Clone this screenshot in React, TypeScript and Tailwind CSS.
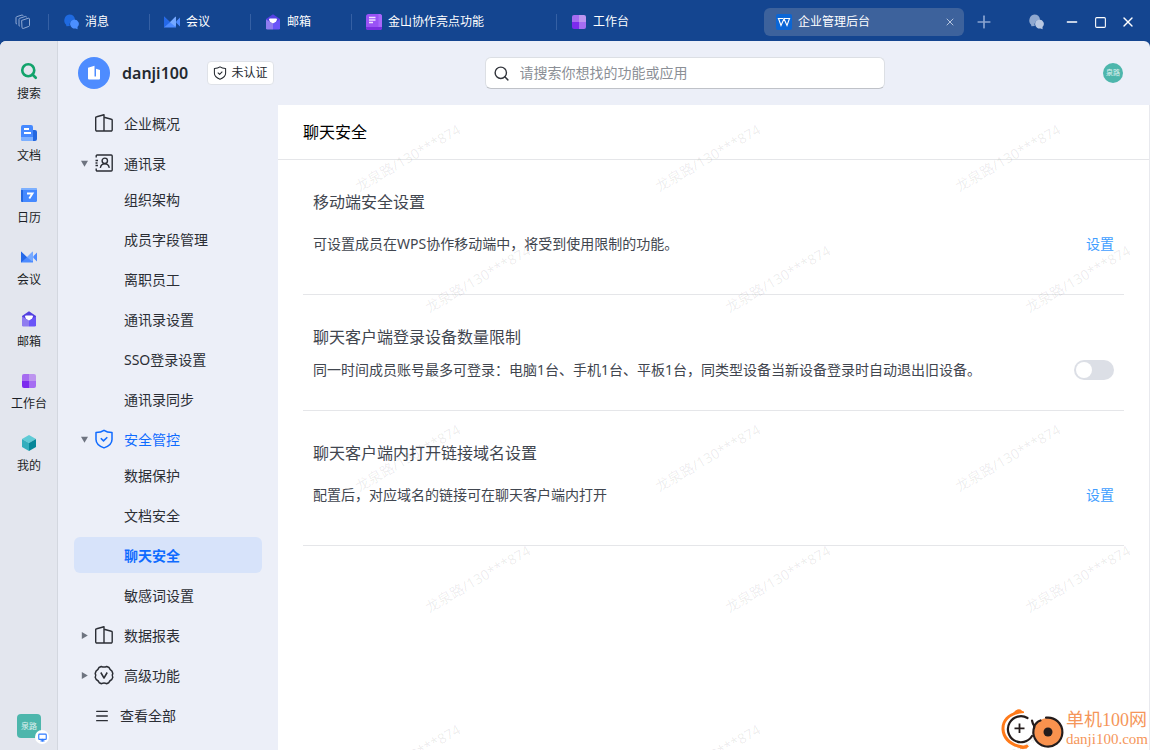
import type { ReactNode } from 'react'
import { Search, Menu, Monitor, Plus, X, Minus, Square } from 'lucide-react'
import clsx from 'clsx'

function ChatIcon({ back, front }: { back: string; front: string }) {
  return (
    <svg width="16" height="16" viewBox="0 0 16 16">
      <path d="M6.2 0.5a6 6 0 0 1 5.9 5.2a5 5 0 0 0-5.3 6.4l-3.4 0.2-0.3-1.6A6 6 0 0 1 6.2 0.5z" fill={back} />
      <path d="M11.4 5.4a4.5 4.5 0 0 1 3.1 7.7l0.1 2.2-2-0.8a4.6 4.6 0 1 1-1.2-9.1z" fill={front} />
    </svg>
  )
}

function MeetingIcon() {
  return (
    <svg width="16" height="16" viewBox="0 0 16 16">
      <path d="M0 2.5 6 8.2 12 2.8V13.5H0z" fill="#4d8bff" />
      <path d="M0 2.5 6 8.2 0 13.5z" fill="#2468e8" />
      <path d="M12 2.5v8.7a1 1 0 0 1-1.7 0.6L6 8.2l4.8-5z" fill="#76a9ff" />
      <path d="M16 3.6v8.8L13 9.6a2 2 0 0 1 0-3.2z" fill="#4d8bff" />
    </svg>
  )
}

function MailIcon() {
  return (
    <svg width="16" height="16" viewBox="0 0 16 16">
      <path d="M8 0.2 15 5v4H1V5z" fill="#5441e0" />
      <path d="M4 5.6a1 1 0 0 1 1-1h6a1 1 0 0 1 1 1L11 8 8 10 5 8z" fill="#fff" />
      <path d="M1 5.4 8 9.4V15.6H2.4A1.4 1.4 0 0 1 1 14.2z" fill="#8f7cf0" />
      <path d="M15 5.4 8 9.4V15.6h5.6a1.4 1.4 0 0 0 1.4-1.4z" fill="#6a55f8" />
    </svg>
  )
}

function WorkbenchIcon() {
  return (
    <svg width="16" height="16" viewBox="0 0 16 16">
      <path d="M3 1h5v7H1V3a2 2 0 0 1 2-2z" fill="#a66cf0" />
      <path d="M8 1h5a2 2 0 0 1 2 2v5H8z" fill="#bd95ef" />
      <path d="M1 8h7v7H3a2 2 0 0 1-2-2z" fill="#7c2bee" />
      <path d="M8 8h7v5a2 2 0 0 1-2 2H8z" fill="#a56df2" />
    </svg>
  )
}

function NoteIcon() {
  return (
    <svg width="16" height="16" viewBox="0 0 16 16">
      <rect width="16" height="16" rx="2.5" fill="#9a52f5" />
      <path d="M0 13h16v0.5a2.5 2.5 0 0 1-2.5 2.5h-11A2.5 2.5 0 0 1 0 13.5z" fill="#7a2fe0" />
      <path d="M12.5 0h1a2.5 2.5 0 0 1 2.5 2.5V13h-3.5z" fill="#a967fb" />
      <path d="M3 3.5h6.5M3 6h6.5M3 8.5h4" stroke="#f0e2ff" strokeWidth="1.3" />
    </svg>
  )
}

function WpsIcon() {
  return (
    <svg width="16" height="16" viewBox="0 0 16 16">
      <rect width="16" height="16" rx="2" fill="#0a66d6" />
      <path d="M1.8 4.5h5.4M2.5 4.5 5 11.5 8 4.8 11 11.5 13.5 4.5M8 4.5h6.2" stroke="#fff" strokeWidth="1.1" fill="none" />
    </svg>
  )
}

function StackIcon() {
  return (
    <svg width="16" height="16" viewBox="0 0 16 16" fill="none" stroke="#8fa9d3" strokeLinejoin="round" strokeLinecap="round">
      <path d="M7 6.3 13.3 4.2A1 1 0 0 1 14.500 5.100V11.500A1 1 0 0 1 13.800 12.400L8.200 14.500A1 1 0 0 1 7 13.600z" />
      <path d="M4.500 12 4 11.800V5.200A1 1 0 0 1 4.700 4.300L10.500 2.400A0.800 0.800 0 0 1 11.500 3" />
      <path d="M1.600 9.800 1 9.600V3.600A1 1 0 0 1 1.700 2.700L7 1A0.800 0.800 0 0 1 8 1.500" />
    </svg>
  )
}

function DocIcon() {
  return (
    <svg width="16" height="16" viewBox="0 0 16 16">
      <path d="M10 5h4a2 2 0 0 1 2 2v7a2 2 0 0 1-2 2h-4z" fill="#2468e0" />
      <path d="M2 0h8a2 2 0 0 1 2 2v14H2a2 2 0 0 1-2-2V2a2 2 0 0 1 2-2z" fill="#4589ff" />
      <path d="M0 12h12v4H2a2 2 0 0 1-2-2z" fill="#7db0ff" />
      <path d="M3 4h5M3 8h7" stroke="#fff" strokeWidth="1.8" />
    </svg>
  )
}

function CalendarIcon() {
  return (
    <svg width="16" height="16" viewBox="0 0 16 16">
      <rect y="1" width="16" height="14" rx="1.5" fill="#4589ff" />
      <path d="M1.5 1h13a1.5 1.5 0 0 1 1.5 1.5V3H0v-0.5A1.5 1.5 0 0 1 1.5 1z" fill="#7db0ff" />
      <path d="M0 3h2v12h-0.5A1.5 1.5 0 0 1 0 13.5z" fill="#2468e0" />
      <path d="M6 6.500h5.500L8.300 11.500" stroke="#fff" strokeWidth="1.9" fill="none" />
    </svg>
  )
}

function CubeIcon() {
  return (
    <svg width="16" height="16" viewBox="0 0 16 16">
      <path d="M8 0 15 4 8 8 1 4z" fill="#5fcbd6" />
      <path d="M1 4 8 8v8L1 12z" fill="#34aebd" />
      <path d="M15 4 8 8v8l7-4z" fill="#078799" />
    </svg>
  )
}

function BuildingIcon() {
  return (
    <svg width="20" height="20" viewBox="0 0 20 20" fill="none" stroke="currentColor" strokeWidth="1.4" strokeLinejoin="round">
      <path d="M10 18V1.8L2.700 3.700a1 1 0 0 0-1 1V16.800A1.200 1.200 0 0 0 2.900 18H17a1.200 1.200 0 0 0 1.200-1.200V7.200a1 1 0 0 0-0.800-1L10 4.200" />
    </svg>
  )
}

function ContactsIcon() {
  return (
    <svg width="20" height="20" viewBox="0 0 20 20" fill="none" stroke="currentColor" strokeWidth="1.4">
      <path d="M2.2 4.5V3A1 1 0 0 1 3.2 2H17.2A1 1 0 0 1 18.2 3V17A1 1 0 0 1 17.2 18H3.2A1 1 0 0 1 2.2 17V15.5M1.5 7.5H4M1.5 12.5H4M1.5 10H3.5" />
      <circle cx="10.8" cy="7.8" r="2.7" />
      <path d="M6.3 14.8c0.6-2.6 2.3-4 4.5-4s3.9 1.4 4.5 4" />
    </svg>
  )
}

function ShieldIcon({ size }: { size: number }) {
  return (
    <svg width={size} height={size} viewBox="0 0 20 20" fill="none" stroke="currentColor" strokeWidth="1.5" strokeLinejoin="round">
      <path d="M10 1.3C12 2.8 15 3.500 18 3.500V10.500C18 14.500 14 17.500 10 18.900 6 17.500 2 14.500 2 10.500V3.500C5 3.500 8 2.800 10 1.300z" />
      <path d="M6.8 9.300 9.500 11.900 13.300 8.200" />
    </svg>
  )
}

function MedalIcon() {
  return (
    <svg width="20" height="20" viewBox="0 0 20 20" fill="none" stroke="currentColor" strokeWidth="1.5" strokeLinejoin="round">
      <path d="M7.300 1.500Q10 2.700 12.700 1.500L15 2.500Q15.800 4.800 18 6.200L18.800 8.500Q17.600 10.300 18.800 12.300L17.800 14.500Q15.500 15.500 14.700 17.700L12.500 18.700Q10 17.400 7.500 18.700L5.300 17.700Q4.500 15.500 2.200 14.500L1.200 12.300Q2.400 10.300 1.200 8.500L2 6.200Q4.200 4.800 5 2.500z" />
      <path d="M6.800 7.500 10 13 13.200 7.500" />
    </svg>
  )
}

const tabs = [
  { label: '消息', icon: <ChatIcon back="#1f6ae0" front="#4b8fff" />, width: 'w-[101px]' },
  { label: '会议', icon: <MeetingIcon />, width: 'w-[101px]' },
  { label: '邮箱', icon: <MailIcon />, width: 'w-[101px]' },
  { label: '金山协作亮点功能', icon: <NoteIcon />, width: 'w-[205px]' },
  { label: '工作台', icon: <WorkbenchIcon />, width: 'w-[208px]' },
]

const railItems = [
  { label: '搜索', icon: <Search size={18} strokeWidth={3.5} className="text-[#12a36b]" /> },
  { label: '文档', icon: <DocIcon /> },
  { label: '日历', icon: <CalendarIcon /> },
  { label: '会议', icon: <MeetingIcon /> },
  { label: '邮箱', icon: <MailIcon /> },
  { label: '工作台', icon: <WorkbenchIcon /> },
  { label: '我的', icon: <CubeIcon /> },
]

type NavGroup = {
  label: string
  icon: ReactNode
  arrow?: 'open' | 'closed'
  active?: boolean
  children?: string[]
}

const navGroups: NavGroup[] = [
  { label: '企业概况', icon: <BuildingIcon /> },
  {
    label: '通讯录',
    icon: <ContactsIcon />,
    arrow: 'open',
    children: ['组织架构', '成员字段管理', '离职员工', '通讯录设置', 'SSO登录设置', '通讯录同步'],
  },
  {
    label: '安全管控',
    icon: <ShieldIcon size={20} />,
    arrow: 'open',
    active: true,
    children: ['数据保护', '文档安全', '聊天安全', '敏感词设置'],
  },
  { label: '数据报表', icon: <BuildingIcon />, arrow: 'closed' },
  { label: '高级功能', icon: <MedalIcon />, arrow: 'closed' },
]

function TitleBar() {
  return (
    <header className="flex h-[41px] shrink-0 items-center pt-[3px] text-white">
      <button aria-label="窗口" className="flex w-12 justify-center pr-0.5">
        <StackIcon />
      </button>
      {tabs.map((tab) => (
        <button
          key={tab.label}
          className={clsx('flex h-4 shrink-0 items-center gap-1.5 border-l border-[#3560a4] pl-3.5 text-xs', tab.width)}
        >
          {tab.icon}
          {tab.label}
        </button>
      ))}
      <div className="flex h-7 w-[200px] shrink-0 items-center rounded-md bg-[#3d629c] pr-2 pl-3">
        <button className="flex flex-1 items-center gap-1.5 text-xs">
          <WpsIcon />
          企业管理后台
        </button>
        <button aria-label="关闭标签">
          <X size={12} strokeWidth={2} className="text-[#b6c5de]" />
        </button>
      </div>
      <button aria-label="新建标签" className="ml-2.5">
        <Plus size={20} strokeWidth={2} className="text-[#8aa4d0]" />
      </button>
      <div className="ml-auto flex items-center gap-3 pr-3.5">
        <button aria-label="聊天" className="mr-2">
          <ChatIcon back="#8fa8d0" front="#b9c8e2" />
        </button>
        <button aria-label="最小化">
          <Minus size={16} strokeWidth={2} />
        </button>
        <button aria-label="最大化" className="flex w-4 justify-center">
          <Square size={13} strokeWidth={2} />
        </button>
        <button aria-label="关闭">
          <X size={16} strokeWidth={2} />
        </button>
      </div>
    </header>
  )
}

function Rail() {
  return (
    <aside className="flex w-[58px] shrink-0 flex-col items-center border-r border-[#d3d7df] bg-[#e3e6ee] pt-5 pl-px">
      <nav className="flex flex-col gap-[21px]">
        {railItems.map((item) => (
          <a key={item.label} href="#" className="flex h-[41px] flex-col items-center justify-between text-xs text-[#1c1f26]">
            <span className="flex h-5 items-center">{item.icon}</span>
            {item.label}
          </a>
        ))}
      </nav>
      <div className="relative mt-auto mb-3">
        <div className="flex size-6 items-center justify-center rounded-sm bg-[#4db6ac] text-[8px] text-white/80">泉路</div>
        <span className="absolute -right-2 -bottom-1.5 flex size-3.5 items-center justify-center rounded-full bg-white">
          <Monitor size={9} strokeWidth={3} className="text-[#2f7bff]" />
        </span>
      </div>
    </aside>
  )
}

function TopBar() {
  return (
    <div className="flex h-16 shrink-0 items-center justify-between pr-[27px] pl-5">
      <div className="flex items-center">
        <div className="flex size-8 items-center justify-center rounded-full bg-[#4e8cff]">
          <svg width="16" height="16" viewBox="0 0 16 16" fill="#fff">
            <path d="M2 2.8 8.5 0.8V11.5H10V3.8L14 5V13.5A1 1 0 0 1 13 14.5H3A1 1 0 0 1 2 13.5z" />
          </svg>
        </div>
        <span className="w-[86px] pl-3 text-base font-semibold text-[#24292f]">danji100</span>
        <span className="ml-[11px] flex h-6 w-[67px] items-center justify-center gap-1 rounded-sm border border-[#dfe2e8] bg-white text-xs whitespace-nowrap text-[#24292f]">
          <ShieldIcon size={14} />
          未认证
        </span>
      </div>
      <label className="flex h-8 w-[400px] items-center gap-2.5 rounded-md border border-[#dcdfe4] border-b-[#bfc2c8] bg-white px-[7px]">
        <Search size={17} strokeWidth={2} className="shrink-0 text-[#33363d]" />
        <input
          type="text"
          aria-label="搜索"
          placeholder="请搜索你想找的功能或应用"
          className="w-full bg-transparent text-sm text-[#24292f] placeholder-[#8b8f96] outline-none"
        />
      </label>
      <div className="ml-2 flex size-5 items-center justify-center rounded-full bg-[#4db6ac] text-[7px] text-white/80">泉路</div>
    </div>
  )
}

function Arrow({ state }: { state?: 'open' | 'closed' }) {
  return (
    <svg width="7" height="7" viewBox="0 0 7 7" fill="#6e7480" className="mr-1.5">
      {state === 'open' && <path d="M0 0.800H7L3.500 6.800z" />}
      {state === 'closed' && <path d="M0.800 0V7L6.800 3.500z" />}
    </svg>
  )
}

function Sidebar() {
  return (
    <nav className="flex w-[220px] shrink-0 flex-col gap-1 px-4 text-sm text-[#2b2e35]">
      {navGroups.map((group) => (
        <div key={group.label}>
          <button className={clsx('flex h-9 w-full items-center pl-[7px]', group.active && 'text-[#0f6bff]')}>
            <Arrow state={group.arrow} />
            <span className="mr-2.5 flex size-5">{group.icon}</span>
            <span className="pt-0.5">{group.label}</span>
          </button>
          {group.children && (
            <ul className="flex flex-col gap-1">
              {group.children.map((child) => (
                <li key={child}>
                  <a
                    href="#"
                    className={clsx(
                      'flex h-9 items-center rounded-md pt-0.5 pl-[50px]',
                      child === '聊天安全' && 'bg-[#d7e3fa] font-bold text-[#0f6bff]',
                    )}
                  >
                    {child}
                  </a>
                </li>
              ))}
            </ul>
          )}
        </div>
      ))}
      <button className="flex h-9 items-center gap-2.5 pt-0.5 pl-5">
        <Menu size={16} strokeWidth={2} />
        查看全部
      </button>
    </nav>
  )
}

const watermarks = [0, 1, 2].flatMap((col) => [
  { x: 130 + col * 300, y: 53 },
  { x: 200 + col * 300, y: 174 },
  { x: 130 + col * 300, y: 353 },
  { x: 200 + col * 300, y: 474 },
  { x: 130 + col * 300, y: 653 },
])

function Watermark() {
  return (
    <div className="pointer-events-none absolute inset-0 overflow-hidden" aria-hidden="true">
      {watermarks.map((mark) => (
        <span
          key={`${mark.x}-${mark.y}`}
          className="absolute -translate-x-1/2 -translate-y-1/2 -rotate-30 text-sm whitespace-nowrap text-black/8"
          style={{ left: mark.x, top: mark.y }}
        >
          龙泉路/130***874
        </span>
      ))}
    </div>
  )
}

function Setting({ title, desc, compact, children }: { title: string; desc: string; compact?: boolean; children: ReactNode }) {
  return (
    <section className="border-b border-[#e5e6e9] px-2.5 py-[30px] text-[#41464f]">
      <h2 className="text-base leading-6">{title}</h2>
      <div className={clsx('mt-2.5 flex items-center justify-between text-sm', compact ? 'h-[21px]' : 'h-10')}>
        <p>{desc}</p>
        {children}
      </div>
    </section>
  )
}

function SiteLogo() {
  return (
    <div className="absolute right-px bottom-0 flex items-center gap-0.5 text-[#f5965a]">
      <svg width="64" height="42" viewBox="0 0 64 42" fill="none">
        <path d="M24 3.500C10 2 1 11 1.500 21.500S12 41 27 40.500L28 37.500C15 38.500 5 31 4.500 21S13 6 24 5z" fill="#ff7a1a" />
        <path d="M13 5Q17 0 20.500 1.500L24 4.500zM20 39.500 27 36.500 29 38.500Q25 42 20 40.500z" fill="#ff7a1a" />
        <path d="M27.500 10A13 13 0 1 0 32 28" stroke="#241c1c" strokeWidth="2.2" strokeLinecap="round" />
        <path d="M19.500 15.500V25M14.500 20.300H24.500" stroke="#241c1c" strokeWidth="1.8" />
        <circle cx="48" cy="24" r="14" fill="#f9924e" />
        <path d="M46 9.700A14.500 14.500 0 1 1 34.500 18.500Q32.500 15.500 32 12.500M34 19Q36 14 40.500 12.500" stroke="#241c1c" strokeWidth="2.2" strokeLinecap="round" />
        <circle cx="48" cy="24" r="4.500" fill="#241c1c" />
      </svg>
      <div className="font-['Liberation_Serif','Noto_Sans_CJK_SC',serif]">
        <div className="text-lg leading-5">单机100网</div>
        <div className="text-[15px] leading-[18px]">danji100.com</div>
      </div>
    </div>
  )
}

export default function App() {
  return (
    <div className="flex min-h-screen flex-col bg-[#144590] font-['Noto_Sans','Noto_Sans_CJK_SC',sans-serif]">
      <TitleBar />
      <div className="flex flex-1 overflow-hidden rounded-t-md bg-[#eceff8]">
        <Rail />
        <div className="flex min-w-0 flex-1 flex-col">
          <TopBar />
          <div className="flex flex-1">
            <Sidebar />
            <main className="relative min-w-0 flex-1 border-r border-[#e8e9ee] bg-white">
              <h1 className="border-b border-[#e5e6e9] px-[25px] py-[15px] text-base leading-6 text-black">聊天安全</h1>
              <div className="px-[25px]">
                <Setting title="移动端安全设置" desc="可设置成员在WPS协作移动端中，将受到使用限制的功能。">
                  <a href="#" className="text-[#409eff]">设置</a>
                </Setting>
                <Setting
                  compact
                  title="聊天客户端登录设备数量限制"
                  desc="同一时间成员账号最多可登录：电脑1台、手机1台、平板1台，同类型设备当新设备登录时自动退出旧设备。"
                >
                  <input
                    type="checkbox"
                    role="switch"
                    aria-label="聊天客户端登录设备数量限制"
                    className="h-5 w-10 shrink-0 appearance-none rounded-full bg-[#dcdfe6] p-0.5 before:block before:size-4 before:rounded-full before:bg-white checked:bg-[#409eff] checked:before:ml-5"
                  />
                </Setting>
                <Setting title="聊天客户端内打开链接域名设置" desc="配置后，对应域名的链接可在聊天客户端内打开">
                  <a href="#" className="text-[#409eff]">设置</a>
                </Setting>
              </div>
              <Watermark />
              <SiteLogo />
            </main>
          </div>
        </div>
      </div>
    </div>
  )
}
